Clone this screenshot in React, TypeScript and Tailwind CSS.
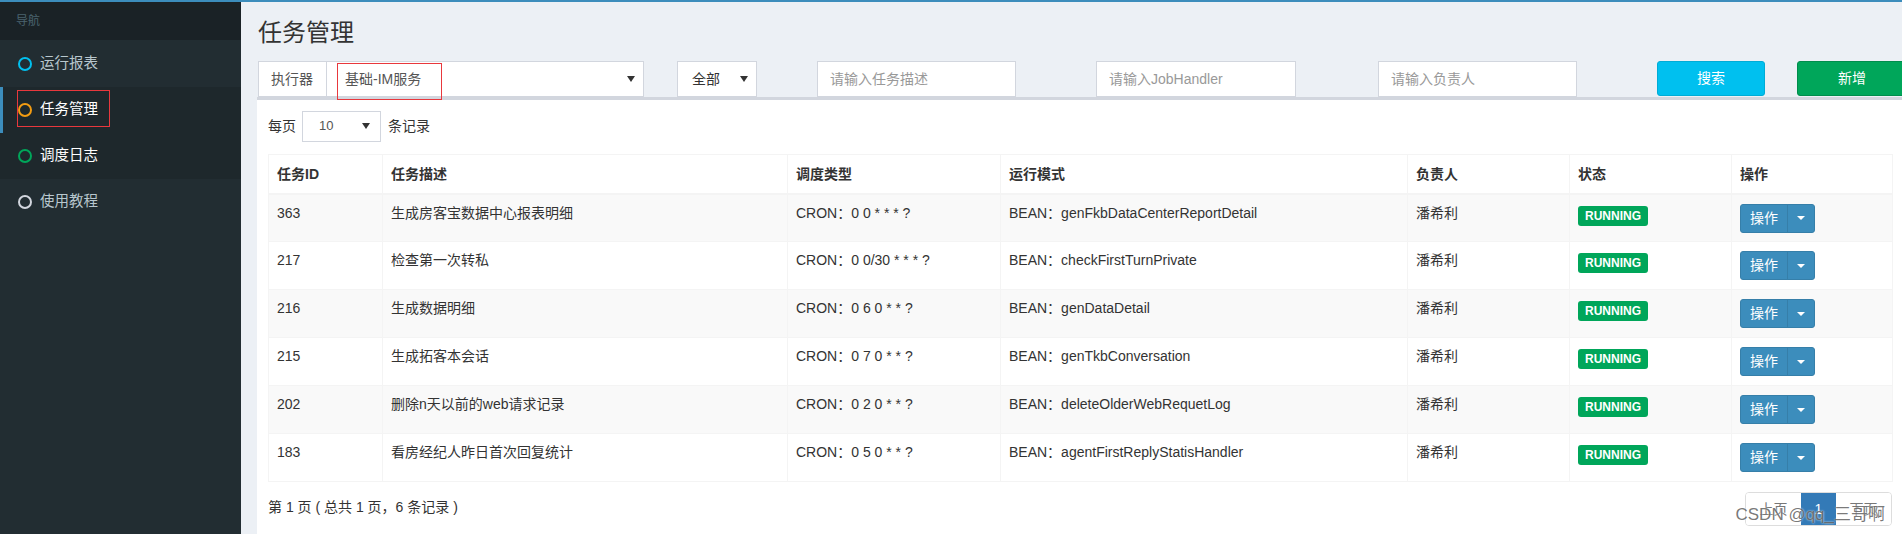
import React from "react";

const rows = [
  { id: "363", desc: "生成房客宝数据中心报表明细", cron: "CRON：0 0 * * * ?", bean: "BEAN：genFkbDataCenterReportDetail" },
  { id: "217", desc: "检查第一次转私", cron: "CRON：0 0/30 * * * ?", bean: "BEAN：checkFirstTurnPrivate" },
  { id: "216", desc: "生成数据明细", cron: "CRON：0 6 0 * * ?", bean: "BEAN：genDataDetail" },
  { id: "215", desc: "生成拓客本会话", cron: "CRON：0 7 0 * * ?", bean: "BEAN：genTkbConversation" },
  { id: "202", desc: "删除n天以前的web请求记录", cron: "CRON：0 2 0 * * ?", bean: "BEAN：deleteOlderWebRequetLog" },
  { id: "183", desc: "看房经纪人昨日首次回复统计", cron: "CRON：0 5 0 * * ?", bean: "BEAN：agentFirstReplyStatisHandler" },
];

const Caret = () => (
  <span className="inline-block w-0 h-0 border-l-[4px] border-r-[4px] border-t-[6px] border-l-transparent border-r-transparent border-t-[#333]" />
);

const NavItem = ({
  label,
  ring,
  bg,
  text,
  active,
  h,
}: {
  label: string;
  ring: string;
  bg: string;
  text: string;
  active?: boolean;
  h: string;
}) => (
  <div className={`relative flex items-center ${h} ${bg}`}>
    {active && <div className="absolute left-0 top-0 bottom-0 w-[3px] bg-[#3c8dbc]" />}
    <span className={`ml-[18px] w-[14px] h-[14px] rounded-full border-[2.5px] ${ring}`} />
    <span className={`ml-[8px] text-[14.5px] ${text}`}>{label}</span>
  </div>
);

export default function App() {
  return (
    <div
      className="w-[1902px] h-[534px] overflow-hidden flex flex-col bg-[#ecf0f5]"
      style={{ fontFamily: '"Liberation Sans", "Noto Sans CJK SC", sans-serif' }}
    >
      <div className="h-[2px] bg-[#3c8dbc] shrink-0" />
      <div className="flex flex-1 min-h-0">
        {/* Sidebar */}
        <aside className="w-[241px] shrink-0 bg-[#222d32] flex flex-col">
          <div className="h-[38px] bg-[#1a2226] flex items-center pl-[16px] text-[12px] text-[#4b646f]">导航</div>
          <NavItem label="运行报表" ring="border-[#00c0ef]" bg="bg-[#222d32]" text="text-[#b8c7ce]" h="h-[47px]" />
          <div className="relative">
            <NavItem label="任务管理" ring="border-[#f39c12]" bg="bg-[#1e282c]" text="text-white" active h="h-[46px]" />
            <div className="absolute left-[17px] top-[3px] w-[93px] h-[37px] border border-[#e8383d]" />
          </div>
          <NavItem label="调度日志" ring="border-[#00a65a]" bg="bg-[#1e282c]" text="text-white" h="h-[46px]" />
          <NavItem label="使用教程" ring="border-[#d2d6de]" bg="bg-[#222d32]" text="text-[#b8c7ce]" h="h-[46px]" />
        </aside>

        {/* Main */}
        <main className="flex-1 min-w-0 flex flex-col">
          <h1 className="mt-[18px] ml-[17px] h-[26px] leading-[26px] text-[24px] text-[#333] font-normal">任务管理</h1>

          {/* Filters */}
          <div className="mt-[15px] ml-[17px] flex h-[36px] text-[14px] shrink-0">
            <div className="shrink-0 w-[69px] flex items-center pl-[12px] bg-white border border-[#d2d6de] text-[#555]">执行器</div>
            <div className="shrink-0 relative w-[317px] flex items-center justify-between pl-[18px] pr-[8px] bg-white border border-l-0 border-[#d2d6de] text-[#555]">
              <span>基础-IM服务</span>
              <Caret />
              <div className="absolute left-[10px] top-[1px] w-[105px] h-[37px] border border-[#e8383d]" />
            </div>
            <div className="shrink-0 ml-[33px] w-[80px] flex items-center justify-between pl-[14px] pr-[8px] bg-white border border-[#d2d6de] text-[#333]">
              <span>全部</span>
              <Caret />
            </div>
            <input
              className="shrink-0 ml-[60px] w-[199px] px-[12px] bg-white border border-[#d2d6de] outline-none placeholder:text-[#999]"
              placeholder="请输入任务描述"
            />
            <input
              className="shrink-0 ml-[80px] w-[200px] px-[12px] bg-white border border-[#d2d6de] outline-none placeholder:text-[#999]"
              placeholder="请输入JobHandler"
            />
            <input
              className="shrink-0 ml-[82px] w-[199px] px-[12px] bg-white border border-[#d2d6de] outline-none placeholder:text-[#999]"
              placeholder="请输入负责人"
            />
            <button className="shrink-0 ml-[80px] w-[108px] h-[35px] rounded-[3px] bg-[#00c0ef] border border-[#00acd6] text-white">搜索</button>
            <button className="shrink-0 ml-[32px] w-[110px] h-[35px] rounded-[3px] bg-[#00a65a] border border-[#008d4c] text-white">新增</button>
          </div>

          {/* Box */}
          <div className="ml-[16px] flex-1 bg-white border-t-[3px] border-[#d2d6de] pl-[11px] pr-[10px] pt-[10px] text-[14px] text-[#333]">
            <div className="flex items-center h-[32px] pl-0">
              <span>每页</span>
              <div className="ml-[6px] w-[79px] h-[31px] flex items-center justify-between pl-[16px] pr-[10px] border border-[#d2d6de] text-[#555]">
                <span className="text-[13px]">10</span>
                <Caret />
              </div>
              <span className="ml-[7px]">条记录</span>
            </div>

            <table className="mt-[12px] w-[1624px] table-fixed border-collapse border border-[#f4f4f4]">
              <colgroup>
                <col className="w-[114px]" />
                <col className="w-[405px]" />
                <col className="w-[213px]" />
                <col className="w-[407px]" />
                <col className="w-[162px]" />
                <col className="w-[162px]" />
                <col className="w-[161px]" />
              </colgroup>
              <thead>
                <tr className="h-[39px] border-b-2 border-[#f4f4f4]">
                  {["任务ID", "任务描述", "调度类型", "运行模式", "负责人", "状态", "操作"].map((h) => (
                    <th key={h} className="px-[8px] text-left font-bold border border-[#f4f4f4] leading-[20px]">
                      {h}
                    </th>
                  ))}
                </tr>
              </thead>
              <tbody>
                {rows.map((r, i) => (
                  <tr key={r.id} className={`h-[48px] ${i % 2 === 0 ? "bg-[#f9f9f9]" : "bg-white"}`}>
                    <td className="px-[8px] pt-[8px] align-top leading-[20px] border border-[#f4f4f4]">{r.id}</td>
                    <td className="px-[8px] pt-[8px] align-top leading-[20px] border border-[#f4f4f4]">{r.desc}</td>
                    <td className="px-[8px] pt-[8px] align-top leading-[20px] border border-[#f4f4f4]">{r.cron}</td>
                    <td className="px-[8px] pt-[8px] align-top leading-[20px] border border-[#f4f4f4]">{r.bean}</td>
                    <td className="px-[8px] pt-[8px] align-top leading-[20px] border border-[#f4f4f4]">潘希利</td>
                    <td className="px-[8px] pt-[10px] align-top border border-[#f4f4f4]">
                      <span className="inline-block h-[20px] leading-[20px] px-[7px] rounded-[3px] bg-[#00a65a] text-white text-[12px] font-bold">
                        RUNNING
                      </span>
                    </td>
                    <td className="px-[8px] pt-[9px] align-top border border-[#f4f4f4]">
                      <div className="inline-flex h-[29px] rounded-[3px] bg-[#3c8dbc] border border-[#367fa9] text-white">
                        <span className="w-[47px] flex items-center justify-center border-r border-[#367fa9]">操作</span>
                        <span className="w-[26px] flex items-center justify-center">
                          <span className="w-0 h-0 border-l-[4px] border-r-[4px] border-t-[4px] border-l-transparent border-r-transparent border-t-white" />
                        </span>
                      </div>
                    </td>
                  </tr>
                ))}
              </tbody>
            </table>

            <div className="relative mt-[10px] w-[1624px] flex items-start justify-between">
              <div className="mt-[5px] leading-[20px]">第 1 页 ( 总共 1 页，6 条记录 )</div>
              <div className="flex h-[34px] rounded-[4px] border border-[#ddd] overflow-hidden">
                <span className="w-[55px] flex items-center justify-center text-[#777] bg-white">上页</span>
                <span className="w-[35px] flex items-center justify-center text-white bg-[#337ab7]">1</span>
                <span className="w-[55px] flex items-center justify-center text-[#777] bg-white">下页</span>
              </div>
              <div className="absolute right-[7px] top-[12px] text-[17px] leading-[22px] text-[#555]/80 pointer-events-none [text-shadow:0_0_2px_white]">
                CSDN @qq_三哥啊
              </div>
            </div>
          </div>
        </main>
      </div>
    </div>
  );
}
